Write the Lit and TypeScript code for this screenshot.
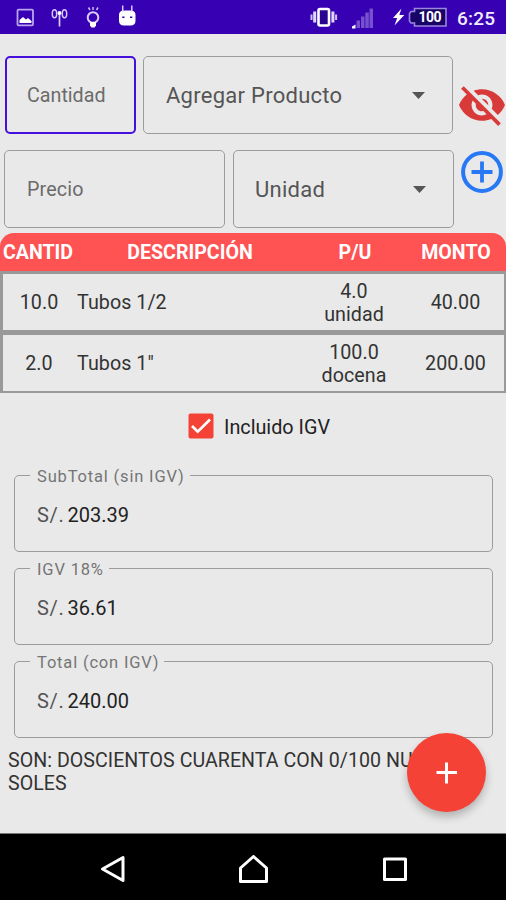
import { LitElement, html, css, svg } from "lit";
import { customElement, property } from "lit/decorators.js";

@customElement("status-bar")
class StatusBar extends LitElement {
  static styles = css`
    :host { display: block; height: 34px; background: #3700b3; }
    .icons { display: block; }
    .small { font: 700 14px Roboto, sans-serif; fill: #fff; }
    .clock { font: 500 19px Roboto, sans-serif; fill: #f1ecff; }
  `;
  render() {
    return html`<svg class="icons" width="506" height="34" viewBox="0 0 506 34">
      <rect x="17.5" y="9.7" width="15.5" height="15.6" rx="1" fill="none" stroke="#b9a4ee" stroke-width="1.8" />
      <path d="M19.5 23v-3l3.500-3 3 2.500 2-1.500 3.500 3v2z" fill="#fff" />
      <g fill="none" stroke="#d9ccff" stroke-width="1.5">
        <path d="M59.500 13v13.500" stroke-width="1.700" />
        <ellipse cx="54.500" cy="13.800" rx="2.200" ry="4" />
        <ellipse cx="64.500" cy="13.800" rx="2.200" ry="4" />
      </g>
      <circle cx="59.500" cy="13" r="2" fill="#fff" />
      <circle cx="93" cy="17.500" r="5.300" fill="none" stroke="#d9ccff" stroke-width="2" />
      <path d="M90 22h6v3.500l-1.500 2h-3L90 25.500z" fill="#fff" />
      <path d="M88.500 7.500l1.500 2.500M93 7v3M98 7.500l-1.500 2.500" stroke="#cbbcf5" stroke-width="1.500" />
      <path d="M119 15q0-4 4-4.500h8.500q4 .5 4 4.500v5.500q0 5-5 5h-6.500q-5 0-5-5z" fill="#fff" />
      <path d="M122.700 5.500v6M131.800 5.500v6" stroke="#d9ccff" stroke-width="1.500" />
      <path d="M122.200 17.200h2.300M130 17.200h2.300" stroke="#3700b3" stroke-width="1.600" />
      <rect x="318.500" y="9" width="10.500" height="16.500" rx="1.500" fill="#2a0690" stroke="#fff" stroke-width="2.600" />
      <path d="M314.700 11.500v11M332.900 11.500v11" stroke="#e0d7ff" stroke-width="3" />
      <path d="M311.500 14.500v5.500M336.100 14.500v5.500" stroke="#cfc2f7" stroke-width="2" />
      <g fill="#7650cf">
        <rect x="356.500" y="20.500" width="3.500" height="7.500" />
        <rect x="361" y="16.500" width="3.500" height="11.500" />
        <rect x="365.300" y="12.500" width="3.500" height="15.500" />
        <rect x="369.500" y="8.500" width="3.500" height="19.500" />
      </g>
      <path d="M352 28.500v-2l3.500-2v4z" fill="#fff" />
      <path d="M401.500 8.500l-8.500 9.500h4.200l-2.700 7.500 9.800-10.500h-5z" fill="#fff" />
      <path d="M414.500 8.500H446v17.500h-31.500v-3H411l-1.500-2v-7.500l1.500-2h3.500z" fill="#170466" stroke="#9c86df" stroke-width="1.600" />
      <text class="small" x="418.500" y="22.200" textLength="23">100</text>
      <text class="clock" x="457" y="25" textLength="38">6:25</text>
    </svg>`;
  }
}

@customElement("money-field")
class MoneyField extends LitElement {
  @property() label = "";
  @property() value = "";
  static styles = css`
    :host { display: block; }
    .field {
      box-sizing: border-box; height: 86px; margin: 0; padding: 0 0 0 15px; min-width: 0;
      border: 1.5px solid #9c9c9c; border-radius: 5px;
    }
    .label {
      position: relative; padding: 0 5px 0 7px; font-size: 16.5px; line-height: 18px;
      letter-spacing: 0.83px; color: #757575;
    }
    .text { position: relative; top: 2px; }
    .line { display: flex; gap: 3px; padding: 19px 0 0 7px; font-size: 20px; line-height: 24px; color: #222; }
    .prefix { color: #555; letter-spacing: 0.7px; }
  `;
  render() {
    return html`<fieldset class="field">
      <legend class="label"><span class="text">${this.label}</span></legend>
      <div class="line"><span class="prefix">S/.</span><span>${this.value}</span></div>
    </fieldset>`;
  }
}

const rows = [
  { qty: "10.0", name: "Tubos 1/2", price: "4.0", unit: "unidad", amount: "40.00" },
  { qty: "2.0", name: "Tubos 1\"", price: "100.0", unit: "docena", amount: "200.00" },
];

const totals = [
  ["SubTotal (sin IGV)", "203.39"],
  ["IGV 18%", "36.61"],
  ["Total (con IGV)", "240.00"],
];

const caret = svg`<path d="M0 0h13l-6.500 7z" fill="#555" />`;

@customElement("app-root")
class AppRoot extends LitElement {
  static styles = css`
    :host {
      display: flex; flex-direction: column; position: relative; width: 506px; height: 900px;
      overflow: hidden; background: #e9e9e9; font-family: Roboto, sans-serif; color: #333;
    }
    .form { display: flex; height: 199px; }
    .inputs { display: flex; flex-direction: column; gap: 16px; padding: 22px 0 0 4px; width: 450px; }
    .pair { display: flex; gap: 7px; }
    .box {
      box-sizing: border-box; height: 78px; border: 1.5px solid #9c9c9c; border-radius: 5px;
      display: flex; align-items: center; justify-content: space-between;
      padding: 0 27px 0 22px; font-size: 19.7px; letter-spacing: 0.15px; color: #6b6b6b;
    }
    .qty { width: 131px; margin-left: 1px; border: 2.5px solid #4510db; padding-left: 20px; letter-spacing: 0; }
    .product { width: 310px; }
    .price { width: 221px; }
    .unit { width: 221px; margin-left: 1px; }
    .select { font-size: 22px; letter-spacing: 0.27px; color: #555; padding-left: 22px; }
    .unit { padding-left: 21px; }
    .actions { width: 52px; display: flex; flex-direction: column; align-items: center; padding-top: 48px; }
    .eye { margin-left: 3px; }
    .add { margin-top: 23px; margin-left: 3px; }
    .cols { display: grid; grid-template-columns: 76px 228px 102px 100px; align-items: center; }
    .head {
      box-sizing: border-box; height: 38px; background: #ff5252; border-radius: 14px 14px 0 0;
      color: #fff; font-weight: 700; font-size: 19.6px; text-align: center; flex: none; padding-top: 1px;
    }
    .row {
      box-sizing: border-box; height: 61px; border: solid #999; border-width: 3px 2px 2px 3px;
      font-size: 19.7px; line-height: 23px; letter-spacing: 0.05px; text-align: center; flex: none;
      grid-template-columns: 72px 228px 102px 101px; padding-top: 1px; color: #333;
    }
    .name { text-align: left; padding-left: 2px; }
    .check { display: flex; align-items: center; gap: 10px; height: 26px; margin: 20px 0 0 188px; font-size: 19.8px; color: #222; }
    .check span { padding-top: 2px; }
    .totals { display: flex; flex-direction: column; gap: 7px; padding: 27px 13px 0 14px; }
    .words { margin: 11px 0 0 8px; font-size: 19.6px; letter-spacing: 0.04px; line-height: 23px; color: #333; white-space: pre-line; }
    .fab {
      position: absolute; left: 407px; top: 733px; width: 79px; height: 79px; border-radius: 50%;
      background: #f44336; box-shadow: 0 5px 9px rgba(0, 0, 0, 0.24); display: grid; place-items: center;
    }
    .nav {
      box-sizing: border-box; height: 67px; margin-top: auto; background: #000; border-top: 1px solid #777;
      display: flex; justify-content: space-between; padding: 21px 98px 0 98px; flex: none;
    }
  `;

  render() {
    return html`
      <status-bar></status-bar>
      <div class="form">
        <div class="inputs">
          <div class="pair">
            <div class="box qty">Cantidad</div>
            <div class="box product select">Agregar Producto<svg width="13" height="7">${caret}</svg></div>
          </div>
          <div class="pair">
            <div class="box price">Precio</div>
            <div class="box unit select">Unidad<svg width="13" height="7">${caret}</svg></div>
          </div>
        </div>
        <div class="actions">
          <svg class="eye" width="46" height="46" viewBox="1 1 22 22" fill="#d83a3a">
            <path d="M12 7c2.760 0 5 2.240 5 5 0 .65-.13 1.260-.36 1.830l2.920 2.920c1.510-1.260 2.700-2.890 3.430-4.750-1.730-4.390-6-7.500-11-7.500-1.400 0-2.740.25-3.980.7l2.160 2.160C10.740 7.130 11.350 7 12 7zM2 4.270l2.280 2.280.46.46C3.080 8.300 1.780 10.020 1 12c1.730 4.390 6 7.500 11 7.500 1.550 0 3.030-.3 4.380-.84l.42.42L19.730 22 21 20.730 3.270 3 2 4.270zM7.530 9.800l1.550 1.550c-.05.21-.08.43-.08.65 0 1.660 1.340 3 3 3 .22 0 .44-.03.65-.08l1.550 1.550c-.67.33-1.410.53-2.200.53-2.760 0-5-2.240-5-5 0-.79.2-1.530.53-2.200zm4.310-.78l3.150 3.150.02-.16c0-1.660-1.340-3-3-3l-.17.01z" />
          </svg>
          <svg class="add" width="42" height="42" viewBox="0 0 42 42" fill="none" stroke="#2678f5">
            <circle cx="21" cy="21" r="18.900" stroke-width="4" />
            <path d="M21 10.500v21M10.500 21h21" stroke-width="3.800" />
          </svg>
        </div>
      </div>
      <div class="cols head"><span>CANTID</span><span>DESCRIPCIÓN</span><span>P/U</span><span>MONTO</span></div>
      <div class="rows">
        ${rows.map(
          (r) => html`<div class="cols row">
            <span>${r.qty}</span><span class="name">${r.name}</span>
            <span>${r.price}<br />${r.unit}</span><span>${r.amount}</span>
          </div>`
        )}
      </div>
      <div class="check">
        <svg width="26" height="26" viewBox="0 0 26 26">
          <rect x=".5" y=".5" width="25" height="25" rx="2" fill="#f44336" />
          <path d="M4 13l5.700 5.700L22 6.500" fill="none" stroke="#fff" stroke-width="2.700" />
        </svg>
        <span>Incluido IGV</span>
      </div>
      <div class="totals">
        ${totals.map(([label, value]) => html`<money-field .label=${label} .value=${value}></money-field>`)}
      </div>
      <div class="words">SON: DOSCIENTOS CUARENTA CON 0/100 NUEVOS
SOLES</div>
      <div class="fab">
        <svg width="22" height="22" viewBox="0 0 22 22"><path d="M10.500 .5v21M.5 10.500h20.500" stroke="#fff" stroke-width="3" /></svg>
      </div>
      <div class="nav">
        <svg width="30" height="30" viewBox="0 0 30 30" fill="none" stroke="#fff" stroke-width="3" stroke-linejoin="round">
          <path d="M4.500 14L25 2.500v23z" />
        </svg>
        <svg width="30" height="30" viewBox="0 0 30 30" fill="none" stroke="#fff" stroke-width="3" stroke-linejoin="round">
          <path d="M2.500 13L15.500 1.500 28.500 13v13.500h-26z" />
        </svg>
        <svg width="30" height="30" viewBox="0 0 30 30" fill="none" stroke="#fff" stroke-width="3" stroke-linejoin="round">
          <path d="M6.500 4h21v20.500h-21z" />
        </svg>
      </div>
    `;
  }
}
